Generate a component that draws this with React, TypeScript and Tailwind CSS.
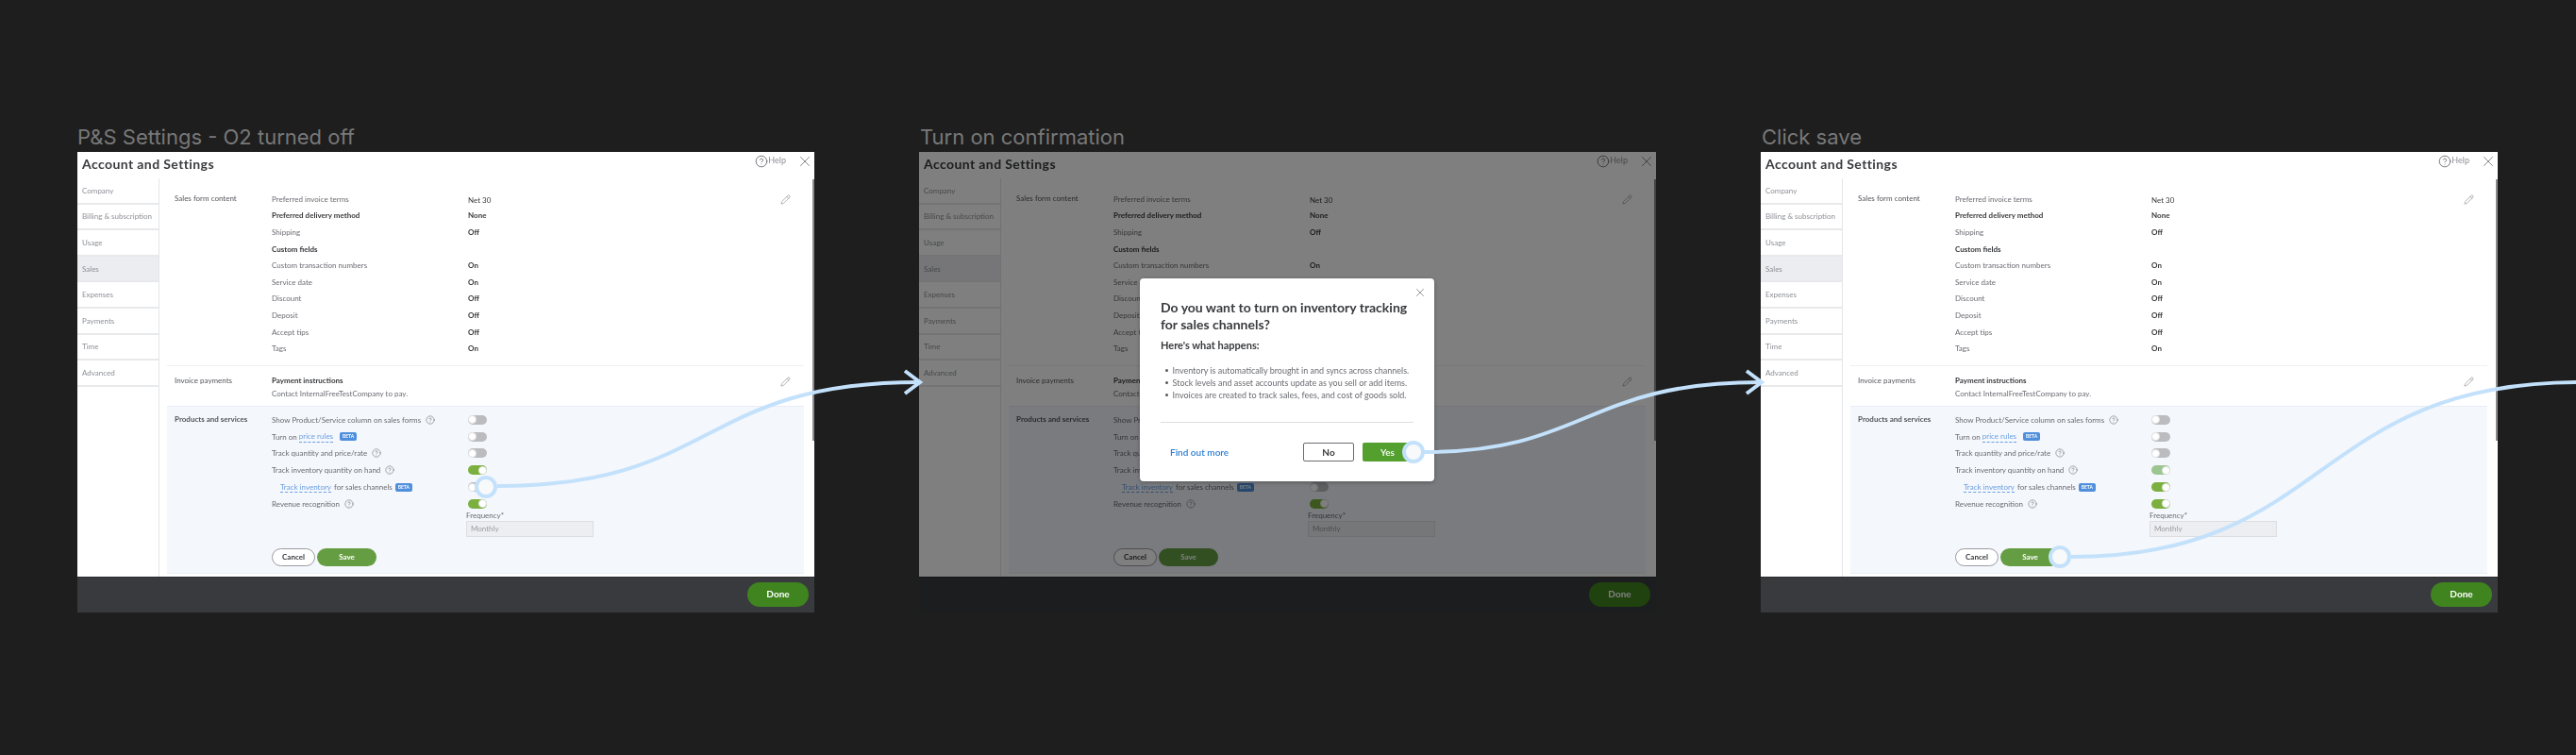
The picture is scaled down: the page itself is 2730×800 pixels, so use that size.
import React from 'react';
import { CircleHelp, Pencil, X } from 'lucide-react';

const navItems = ['Company', 'Billing & subscription', 'Usage', 'Sales', 'Expenses', 'Payments', 'Time', 'Advanced'];

const salesRows = [
  { label: 'Preferred invoice terms', value: 'Net 30' },
  { label: 'Preferred delivery method', value: 'None', bold: true },
  { label: 'Shipping', value: 'Off' },
  { label: 'Custom fields', value: '', bold: true },
  { label: 'Custom transaction numbers', value: 'On' },
  { label: 'Service date', value: 'On' },
  { label: 'Discount', value: 'Off' },
  { label: 'Deposit', value: 'Off' },
  { label: 'Accept tips', value: 'Off' },
  { label: 'Tags', value: 'On' },
];

const Hint = () => <CircleHelp className="ml-[5px] h-[10px] w-[10px] text-[#6b6c72]" strokeWidth={1.4} />;

const Beta = () => (
  <span className="ml-[3px] flex h-[9px] w-[18px] items-center justify-center rounded-[2px] bg-[#4f8fdc] text-[5px] font-bold leading-none text-white">
    BETA
  </span>
);

const LinkText = ({ children }: { children: React.ReactNode }) => (
  <span className="border-b border-dashed border-[#6a9fdf] leading-[11px] text-[#6a9fdf]">{children}</span>
);

const Toggle = ({ on = false, faded = false }: { on?: boolean; faded?: boolean }) => (
  <div
    className={`ml-[2px] flex h-[10px] w-[20px] items-center rounded-full ${
      on ? (faded ? 'justify-end bg-[#9cc68f]' : 'justify-end bg-[#7bb03f]') : 'justify-start bg-[#bbbcc0]'
    }`}
  >
    <div className="h-[9px] w-[9px] rounded-full border border-[#e5e5e5] bg-white" />
  </div>
);

const ProductRow = ({ children, toggle }: { children: React.ReactNode; toggle: React.ReactNode }) => (
  <div className="flex h-[17.8px] items-center">
    <div className="flex w-[206px] items-center">{children}</div>
    {toggle}
  </div>
);

const SettingsFrame = ({ left, fadedToggle = false, children }: { left: string; fadedToggle?: boolean; children?: React.ReactNode }) => (
  <div className={`absolute top-[161px] flex h-[488px] w-[781px] flex-col whitespace-nowrap font-['Lato',sans-serif] text-[8px] blur-[0.3px] ${left}`}>
    <div className="relative flex h-[450px] flex-col bg-white">
      <div className="flex h-[28px] items-center pl-[5px] pr-px">
        <span className="mb-[4px] text-[14px] font-bold tracking-[0.4px] text-[#393a3d]">Account and Settings</span>
        <CircleHelp className="mb-[8px] ml-auto h-[14px] w-[14px] text-[#5f6066]" strokeWidth={1.4} />
        <span className="mb-[11px] text-[9px] leading-[12px] text-[#8d9096]">Help</span>
        <X className="mb-[8px] ml-[11px] h-[18px] w-[18px] text-[#5f6066]" strokeWidth={1} />
      </div>

      <div className="flex min-h-0 flex-1">
        <div className="w-[87px] border-r border-[#e4e5e8]">
          {navItems.map((item) => (
            <div
              key={item}
              className={`flex h-[27.6px] items-center border-b-2 border-[#e8e9eb] pl-[5px] text-[#8d9096] ${
                item === 'Sales' ? 'bg-[#ecedf1]' : ''
              }`}
            >
              {item}
            </div>
          ))}
        </div>

        <div className="ml-[8px] w-[675px] text-[#6b6c72]">
          <div className="flex h-[199px] border-b border-[#eef0f4] pl-[8px] pt-[13px]">
            <div className="w-[103px] pt-[3px] leading-[11px] text-[#55565b]">Sales form content</div>
            <div className="w-[208px]">
              {salesRows.map((row) => (
                <div key={row.label} className={`flex h-[17.6px] items-center ${row.bold ? 'font-bold text-[#393a3d]' : ''}`}>
                  {row.label}
                </div>
              ))}
            </div>
            <div className="w-[60px] font-bold text-[#393a3d]">
              {salesRows.map((row) => (
                <div key={row.label} className={`flex h-[17.6px] items-center ${row.value === 'Net 30' ? 'pt-[2px] font-normal' : ''}`}>
                  {row.value}
                </div>
              ))}
            </div>
            <Pencil className="ml-auto mr-[14px] mt-[4px] h-[11px] w-[11px] text-[#8d9096]" strokeWidth={1.5} />
          </div>

          <div className="flex h-[42px] pl-[8px] pt-[8px] leading-[14px]">
            <div className="w-[103px] text-[#55565b]">Invoice payments</div>
            <div>
              <div className="font-bold text-[#393a3d]">Payment instructions</div>
              <div>Contact InternalFreeTestCompany to pay.</div>
            </div>
            <Pencil className="ml-auto mr-[14px] mt-[3px] h-[11px] w-[11px] text-[#8d9096]" strokeWidth={1.5} />
          </div>

          <div className="flex h-[178px] border-y border-[#e8edf5] bg-[#f4f7fc] pl-[8px] pt-[5px]">
            <div className="w-[103px] pt-[3px] font-bold leading-[11px] text-[#55565b]">Products and services</div>
            <div>
              <ProductRow toggle={<Toggle />}>
                Show Product/Service column on sales forms <Hint />
              </ProductRow>
              <ProductRow toggle={<Toggle />}>
                <span className="mr-[2px]">Turn on</span>
                <LinkText>price rules</LinkText>
                <span className="w-[4px]" />
                <Beta />
              </ProductRow>
              <ProductRow toggle={<Toggle />}>
                Track quantity and price/rate <Hint />
              </ProductRow>
              <ProductRow toggle={<Toggle on faded={fadedToggle} />}>
                Track inventory quantity on hand <Hint />
              </ProductRow>
              <ProductRow toggle={<Toggle on={fadedToggle} />}>
                <span className="ml-[9px] mr-[3px]">
                  <LinkText>Track inventory</LinkText>
                </span>
                for sales channels
                <Beta />
              </ProductRow>
              <ProductRow toggle={<Toggle on />}>
                Revenue recognition <Hint />
              </ProductRow>
              <div className="-mt-[2px] ml-[206px] w-[135px]">
                <div className="leading-[11px]">Frequency*</div>
                <div className="flex h-[17px] w-[135px] items-center border border-[#dcdee2] bg-[#eceef1] pl-[4px] text-[#9a9ca1]">
                  Monthly
                </div>
              </div>
              <div className="mt-[12px] flex gap-[2px] font-bold leading-none">
                <div className="flex h-[19px] w-[46px] items-center justify-center rounded-full border border-[#9a9ca1] bg-white text-[#393a3d]">
                  Cancel
                </div>
                <div className="flex h-[19px] w-[63px] items-center justify-center rounded-full bg-[#659e42] text-white">Save</div>
              </div>
            </div>
          </div>
        </div>
      </div>

      <div className="absolute right-0 top-[29px] h-[277px] w-[2px] bg-[#8a8b8e]" />
    </div>

    <div className="flex h-[38px] items-center justify-end border-t border-[#2c2d30] bg-[#393a3e] pb-[2px] pr-[6px]">
      <div className="flex h-[26px] w-[65px] items-center justify-center rounded-full bg-[#3f841f] text-[10px] font-bold text-white">Done</div>
    </div>
    {children}
  </div>
);

const bullets = [
  'Inventory is automatically brought in and syncs across channels.',
  'Stock levels and asset accounts update as you sell or add items.',
  'Invoices are created to track sales, fees, and cost of goods sold.',
];

const ConfirmDialog = () => (
  <div className="absolute left-[234px] top-[134px] h-[215px] w-[312px] rounded-[4px] bg-white px-[22px] pt-[22px] shadow-[0_1px_4px_rgba(0,0,0,0.3)]">
    <X className="absolute right-[8px] top-[8px] h-[14px] w-[14px] text-[#6b6c72]" strokeWidth={1.2} />
    <div className="text-[14px] font-bold leading-[17.5px] text-[#393a3d]">
      Do you want to turn on inventory tracking
      <br />
      for sales channels?
    </div>
    <div className="mt-[7px] text-[11px] font-bold leading-[14px] text-[#393a3d]">Here's what happens:</div>
    <ul className="mt-[13px] text-[9px] leading-[13px] text-[#6b6c72]">
      {bullets.map((item) => (
        <li key={item} className="flex items-center">
          <span className="ml-[5px] mr-[5px] h-[2.5px] w-[2.5px] rounded-full bg-[#55565b]" />
          {item}
        </li>
      ))}
    </ul>
    <div className="mt-[22px] border-t border-[#dcdee2]" />
    <div className="mr-[-2px] mt-[21px] flex items-center text-[10px] leading-none">
      <span className="ml-[10px] font-semibold text-[#2d7fd3]">Find out more</span>
      <div className="ml-auto flex h-[20px] w-[54px] items-center justify-center rounded-[2px] border border-[#6b6c72] font-bold text-[#393a3d]">No</div>
      <div className="ml-[9px] flex h-[20px] w-[56px] items-center justify-center rounded-[2px] bg-[#53a02f] pr-[3px] font-semibold text-white">Yes</div>
    </div>
  </div>
);

const Title = ({ left, children }: { left: string; children: React.ReactNode }) => (
  <div className={`absolute top-[130px] font-['Inter',sans-serif] text-[22px] leading-[30px] text-[#787878] ${left}`}>{children}</div>
);

const arrowColor = '#c3e1fb';

const Dot = ({ cx, cy }: { cx: number; cy: number }) => (
  <circle cx={cx} cy={cy} r={10} fill="#f8f9fb" stroke={arrowColor} strokeWidth={4} />
);

const Arrows = () => (
  <svg className="pointer-events-none absolute left-0 top-0" width={2730} height={800} fill="none">
    <g stroke={arrowColor} strokeWidth={4}>
      <path d="M527 515 C760 515 740 405 974 405" />
      <path d="M959 393 L975 405 L959 417" />
      <path d="M1510 479 C1680 479 1680 405 1866 405" />
      <path d="M1851 393 L1867 405 L1851 417" />
      <path d="M2195 590 C2470 590 2450 405 2735 405" />
    </g>
    <Dot cx={515} cy={516} />
    <Dot cx={1498} cy={479} />
    <Dot cx={2183} cy={590} />
  </svg>
);

export default function App() {
  return (
    <div className="relative h-[800px] w-[2730px] overflow-hidden bg-[#1e1e1e]">
      <Title left="left-[82px]">P&amp;S Settings - O2 turned off</Title>
      <Title left="left-[975px]">Turn on confirmation</Title>
      <Title left="left-[1867px]">Click save</Title>

      <SettingsFrame left="left-[82px]" />
      <SettingsFrame left="left-[974px]">
        <div className="absolute inset-0 bg-black/50" />
        <ConfirmDialog />
      </SettingsFrame>
      <SettingsFrame left="left-[1866px]" fadedToggle />

      <Arrows />
    </div>
  );
}
